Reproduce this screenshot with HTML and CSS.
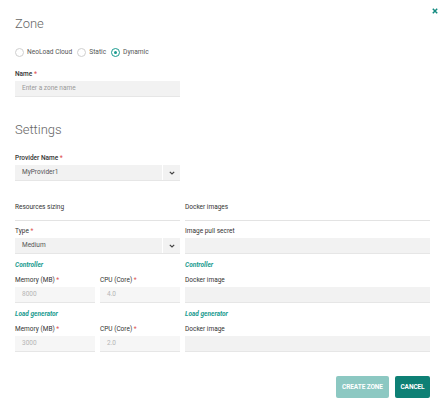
FILE: index.html
```html
<!DOCTYPE html>
<html lang="en">
<head>
  <meta charset="UTF-8" />
  <title>Zone</title>
  <link rel="stylesheet" href="styles.css">
</head>
<body>
  <div class="dialog">
    <button class="close" aria-label="Close">
      <svg width="6" height="6" viewBox="0 0 6 6"><path d="M0.8 0.8L5.2 5.2M5.2 0.8L0.8 5.2" stroke="#138b80" stroke-width="1.5"/></svg>
    </button>

    <h2 class="title">Zone</h2>

    <div class="radios">
      <label class="radio"><span class="dot"></span>NeoLoad Cloud</label>
      <label class="radio"><span class="dot"></span>Static</label>
      <label class="radio"><span class="dot checked"></span>Dynamic</label>
    </div>

    <div class="field name-field">
      <label class="lbl strong">Name <span class="req">*</span></label>
      <div class="input placeholder">Enter a zone name</div>
    </div>

    <h2 class="title settings">Settings</h2>

    <div class="field provider-field">
      <label class="lbl strong">Provider Name <span class="req">*</span></label>
      <div class="select"><span>MyProvider1</span><span class="chev"><svg width="6" height="4" viewBox="0 0 6 4"><path d="M0.8 0.8L3 3L5.2 0.8" stroke="#444" stroke-width="1.2" fill="none"/></svg></span></div>
    </div>

    <div class="columns">
      <div class="col left">
        <div class="section-head">Resources sizing</div>
        <div class="field">
          <label class="lbl">Type <span class="req">*</span></label>
          <div class="select"><span>Medium</span><span class="chev"><svg width="6" height="4" viewBox="0 0 6 4"><path d="M0.8 0.8L3 3L5.2 0.8" stroke="#444" stroke-width="1.2" fill="none"/></svg></span></div>
        </div>
        <div class="group">Controller</div>
        <div class="pair">
          <div class="field">
            <label class="lbl">Memory (MB) <span class="req">*</span></label>
            <div class="input disabled">8000</div>
          </div>
          <div class="field">
            <label class="lbl">CPU (Core) <span class="req">*</span></label>
            <div class="input disabled">4.0</div>
          </div>
        </div>
        <div class="group">Load generator</div>
        <div class="pair">
          <div class="field">
            <label class="lbl">Memory (MB) <span class="req">*</span></label>
            <div class="input disabled">3000</div>
          </div>
          <div class="field">
            <label class="lbl">CPU (Core) <span class="req">*</span></label>
            <div class="input disabled">2.0</div>
          </div>
        </div>
      </div>

      <div class="col right">
        <div class="section-head">Docker images</div>
        <div class="field">
          <label class="lbl">Image pull secret</label>
          <div class="input"></div>
        </div>
        <div class="group">Controller</div>
        <div class="field">
          <label class="lbl">Docker image</label>
          <div class="input"></div>
        </div>
        <div class="group">Load generator</div>
        <div class="field">
          <label class="lbl">Docker image</label>
          <div class="input"></div>
        </div>
      </div>
    </div>

    <div class="actions">
      <button class="btn btn-disabled">CREATE ZONE</button>
      <button class="btn btn-primary">CANCEL</button>
    </div>
  </div>
</body>
</html>
```

FILE: styles.css
```css
body {
  margin: 0;
  font-family: Roboto, "Liberation Sans", sans-serif;
  background: #fff;
  color: #333;
}

.dialog {
  position: relative;
  width: 415px;
  padding: 16px 16px 0 15px;
}

.close {
  position: absolute;
  top: 8px;
  right: 8px;
  border: 0;
  padding: 0;
  background: none;
  line-height: 0;
}

.title {
  margin: 0;
  font-size: 13px;
  line-height: 16px;
  font-weight: 300;
  color: #666;
}

.settings {
  margin-top: 25px;
}

.radios {
  display: flex;
  gap: 5px;
  margin-top: 15px;
  height: 10px;
  align-items: center;
}

.radio {
  display: flex;
  align-items: center;
  gap: 3px;
  font-size: 6.6px;
  color: #555;
}

.dot {
  width: 7px;
  height: 7px;
  border: 1px solid #cfcfcf;
  border-radius: 50%;
  display: flex;
  align-items: center;
  justify-content: center;
}

.dot.checked {
  border-color: #1a9b8f;
}

.dot.checked::after {
  content: "";
  width: 3px;
  height: 3px;
  border-radius: 50%;
  background: #1a9b8f;
}

.field {
  display: flex;
  flex-direction: column;
}

.name-field {
  margin-top: 13px;
  width: 165px;
}

.provider-field {
  margin-top: 16px;
  width: 165px;
}

.lbl {
  font-size: 6.5px;
  line-height: 8px;
  font-weight: 400;
  color: #333;
  margin-bottom: 3px;
}

.lbl.strong {
  font-weight: 500;
}

.req {
  color: #e05454;
}

.input,
.select {
  height: 16px;
  background: #f2f2f2;
  border-bottom: 1px solid #e6e6e6;
  box-sizing: border-box;
  font-size: 6.5px;
  line-height: 15px;
  padding: 0 7px;
  color: #555;
}

.placeholder {
  color: #999;
}

.input.disabled {
  background: #f6f6f6;
  color: #b5b5b5;
}

.select {
  display: flex;
  justify-content: space-between;
  padding-right: 0;
}

.chev {
  width: 17px;
  border-left: 1px solid #fff;
  display: flex;
  align-items: center;
  justify-content: center;
}

.columns {
  display: flex;
  gap: 5px;
  margin-top: 22px;
}

.col {
  display: flex;
  flex-direction: column;
}

.left {
  width: 165px;
}

.right {
  width: 245px;
}

.section-head {
  font-size: 6.5px;
  line-height: 8px;
  font-weight: 400;
  color: #333;
  padding-bottom: 9px;
  border-bottom: 1px solid #e3e3e3;
  margin-bottom: 6px;
}

.group {
  font-size: 6.5px;
  line-height: 8px;
  font-style: italic;
  font-weight: 700;
  color: #1a9b8f;
  margin: 7px 0 7px;
}

.pair {
  display: flex;
  gap: 5px;
}

.pair .field {
  flex: 1;
}

.actions {
  display: flex;
  justify-content: flex-end;
  gap: 6px;
  margin-top: 24px;
}

.btn {
  height: 22px;
  border: 0;
  border-radius: 2px;
  font-family: Roboto, "Liberation Sans", sans-serif;
  font-size: 6.5px;
  font-weight: 700;
  color: #fff;
  padding: 0;
  white-space: nowrap;
  letter-spacing: -0.1px;
}

.btn-disabled {
  width: 53px;
  background: #8cc8c2;
}

.btn-primary {
  width: 35px;
  background: #0e8075;
}
```
